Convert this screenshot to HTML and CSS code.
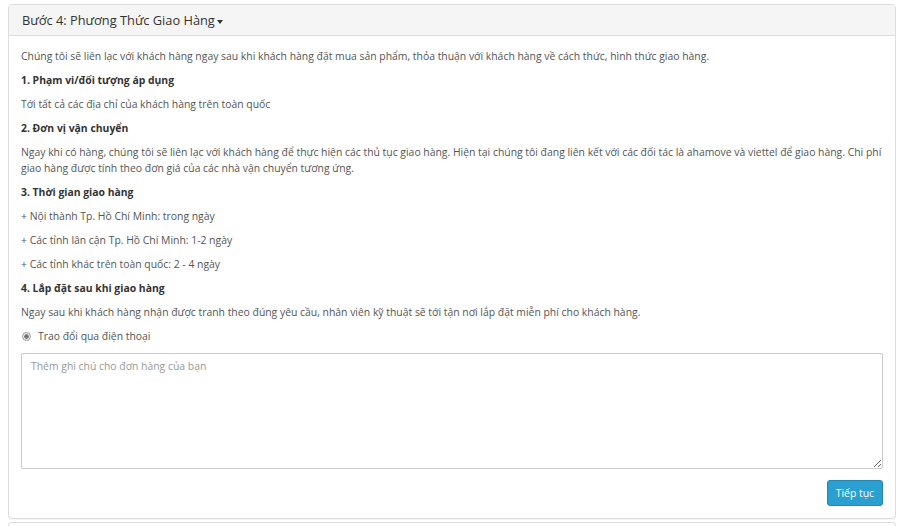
FILE: index.html
```html
<!DOCTYPE html>
<html lang="vi">
<head>
    <meta charset="UTF-8">
    <meta name="viewport" content="width=device-width, initial-scale=1.0">
    <title>Phương Thức Giao Hàng</title>
    <link rel="stylesheet" href="styles.css">
</head>
<body>

<div class="panel">
    <div class="panel-heading">
        Bước 4: Phương Thức Giao Hàng <span class="caret"></span>
    </div>
    <div class="panel-body">
        <p>Chúng tôi sẽ liên lạc với khách hàng ngay sau khi khách hàng đặt mua sản phẩm, thỏa thuận với khách hàng về cách thức, hình thức giao hàng.</p>
        <p><strong>1. Phạm vi/đối tượng áp dụng</strong></p>
        <p>Tới tất cả các địa chỉ của khách hàng trên toàn quốc</p>
        <p><strong>2. Đơn vị vận chuyển</strong></p>
        <p>Ngay khi có hàng, chúng tôi sẽ liên lạc với khách hàng để thực hiện các thủ tục giao hàng. Hiện tại chúng tôi đang liên kết với các đối tác là ahamove và viettel để giao hàng. Chi phí giao hàng được tính theo đơn giá của các nhà vận chuyển tương ứng.</p>
        <p><strong>3. Thời gian giao hàng</strong></p>
        <p>+ Nội thành Tp. Hồ Chí Minh: trong ngày</p>
        <p>+ Các tỉnh lân cận Tp. Hồ Chí Minh: 1-2 ngày</p>
        <p>+ Các tỉnh khác trên toàn quốc: 2 - 4 ngày</p>
        <p><strong>4. Lắp đặt sau khi giao hàng</strong></p>
        <p>Ngay sau khi khách hàng nhận được tranh theo đúng yêu cầu, nhân viên kỹ thuật sẽ tới tận nơi lắp đặt miễn phí cho khách hàng.</p>
        <label class="radio">
            <input type="radio" name="shipping" checked>
            Trao đổi qua điện thoại
        </label>
        <textarea class="note" placeholder="Thêm ghi chú cho đơn hàng của bạn"></textarea>
        <div class="actions">
            <button class="btn-next">Tiếp tục</button>
        </div>
    </div>
</div>
<div class="panel panel-next"></div>

</body>
</html>
```

FILE: styles.css
```css
body {
    font-family: 'Open Sans', sans-serif;
    font-size: 10.4px;
    line-height: 16px;
    color: #555;
    margin: 0;
    padding: 4px 6px 0 8px;
    background: #fff;
}
.panel {
    border: 1px solid #ddd;
    border-radius: 4px;
    background: #fff;
    box-shadow: 0 1px 1px rgba(0, 0, 0, 0.05);
    margin-bottom: 3px;
}
.panel-heading {
    background: #f5f5f5;
    border-bottom: 1px solid #ddd;
    border-radius: 3px 3px 0 0;
    padding: 5px 12px 5px 13px;
    font-size: 12.8px;
    line-height: 20px;
    color: #333;
}
.caret {
    display: inline-block;
    width: 0;
    height: 0;
    border-top: 4px solid #333;
    border-left: 3.5px solid transparent;
    border-right: 3.5px solid transparent;
    vertical-align: middle;
    margin-left: -1px;
}
.panel-body {
    padding: 12px;
}
p {
    margin: 0 0 8px;
}
strong {
    color: #333;
}
.radio {
    display: flex;
    align-items: center;
    gap: 7px;
    margin: 0 0 9px 1px;
}
.radio input {
    appearance: none;
    width: 9px;
    height: 9px;
    margin: 0;
    border: 1px solid #999;
    border-radius: 50%;
    background: radial-gradient(circle, #777 0 2px, #eee 2.5px);
}
.note {
    display: block;
    box-sizing: border-box;
    width: 100%;
    height: 116px;
    border: 1px solid #ccc;
    border-radius: 2px;
    padding: 4px 9px;
    font-family: inherit;
    font-size: 10.4px;
    line-height: 16px;
    color: #555;
    resize: vertical;
}
.note::placeholder {
    color: #999;
}
.actions {
    display: flex;
    justify-content: flex-end;
    margin-top: 11px;
}
.btn-next {
    font-family: inherit;
    font-size: 10.4px;
    color: #fff;
    background: #2a9fd0;
    border: 1px solid #2487b3;
    border-radius: 3px;
    padding: 4px 8px;
    line-height: 16px;
    cursor: pointer;
}
.panel-next {
    height: 10px;
    border-bottom: 0;
    border-radius: 4px 4px 0 0;
}
```
